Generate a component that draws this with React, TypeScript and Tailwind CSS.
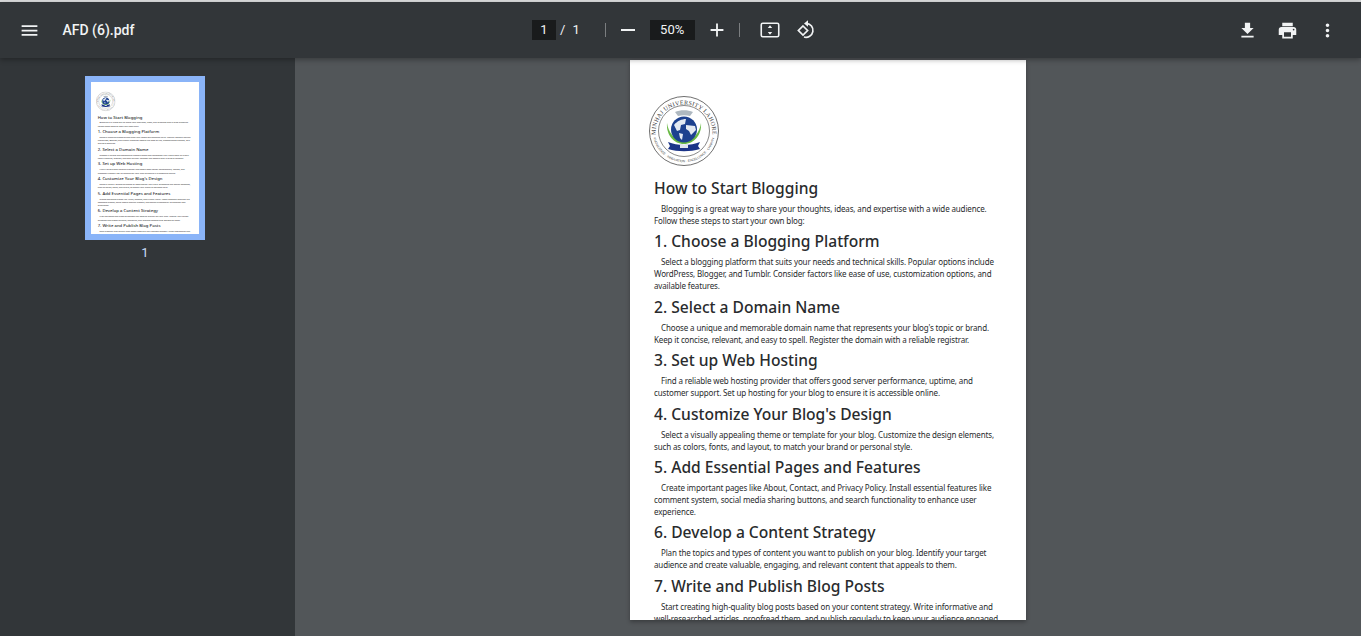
import React from 'react';

const SECTIONS = [
  { title: '1. Choose a Blogging Platform', lines: ['Select a blogging platform that suits your needs and technical skills. Popular options include', 'WordPress, Blogger, and Tumblr. Consider factors like ease of use, customization options, and', 'available features.'] },
  { title: '2. Select a Domain Name', lines: ["Choose a unique and memorable domain name that represents your blog's topic or brand.", 'Keep it concise, relevant, and easy to spell. Register the domain with a reliable registrar.'] },
  { title: '3. Set up Web Hosting', lines: ['Find a reliable web hosting provider that offers good server performance, uptime, and', 'customer support. Set up hosting for your blog to ensure it is accessible online.'] },
  { title: "4. Customize Your Blog's Design", lines: ['Select a visually appealing theme or template for your blog. Customize the design elements,', 'such as colors, fonts, and layout, to match your brand or personal style.'] },
  { title: '5. Add Essential Pages and Features', lines: ['Create important pages like About, Contact, and Privacy Policy. Install essential features like', 'comment system, social media sharing buttons, and search functionality to enhance user', 'experience.'] },
  { title: '6. Develop a Content Strategy', lines: ['Plan the topics and types of content you want to publish on your blog. Identify your target', 'audience and create valuable, engaging, and relevant content that appeals to them.'] },
  { title: '7. Write and Publish Blog Posts', lines: ['Start creating high-quality blog posts based on your content strategy. Write informative and', 'well-researched articles, proofread them, and publish regularly to keep your audience engaged.'] },
];

const Icon = ({ d, className = 'w-[21px] h-[21px]' }: { d: string; className?: string }) => (
  <svg viewBox="0 0 24 24" fill="currentColor" className={className} aria-hidden="true">
    <path d={d} />
  </svg>
);

const Logo = ({ id }: { id: string }) => (
  <svg viewBox="0 0 72 72" className="w-[72px] h-[72px]" aria-hidden="true">
    <defs>
      <path id={`${id}Top`} d="M7.500 38A28.500 28.500 0 1 1 64.500 38" />
      <path id={`${id}Bottom`} d="M4.800 36A31.200 31.200 0 0 0 67.200 36" />
    </defs>
    <circle cx="36" cy="36" r="34.500" fill="#fff" stroke="#4a4a4a" strokeWidth="0.8" />
    <circle cx="36" cy="36" r="25.500" fill="#fff" stroke="#555" strokeWidth="0.7" />
    <text fontFamily="'Liberation Serif', serif" fontSize="6" fill="#333" letterSpacing="0.3">
      <textPath href={`#${id}Top`} startOffset="50%" textAnchor="middle">MINHAJ UNIVERSITY LAHORE</textPath>
    </text>
    <text fontFamily="'Liberation Sans', sans-serif" fontSize="3.200" fill="#444">
      <textPath href={`#${id}Bottom`} startOffset="50%" textAnchor="middle">KNOWLEDGE · INNOVATION · EXCELLENCE · CHARITY</textPath>
    </text>
    <path d="M27 17c5-2.500 13-2.500 18 0l-3 4c-4-1-8-1-12 0z" fill="#aeb8c0" />
    <path d="M19 28c-1 12 7 21 17 21s18-9 17-21c-1 9-8 18-17 18s-16-9-17-18z" fill="#69b944" />
    <circle cx="36" cy="34.500" r="13" fill="#1d418f" />
    <path d="M26 30c3-4 8-6 12-6l-1 5-4 1-1 5-3 1zM38 30l9 1 1 4-5 5-2-4-3-2zM31 38l4 1-1 6-2-2z" fill="#e3e9f2" />
    <path d="M20 47c5 2 10 3 16 3s11-1 16-3l-2 4 2 3c-10 3-22 3-32 0l2-3z" fill="#1b3488" />
    <rect x="32" y="49.500" width="8" height="3.500" fill="#dfe4ee" />
  </svg>
);

const PageContent = ({ id }: { id: string }) => (
  <div className="w-[396px] h-[560px] bg-white overflow-hidden text-[#292b2d] font-['Noto_Sans',sans-serif]">
    <div className="h-[35px]" />
    <div className="pl-[18px] h-[72px]">
      <Logo id={id} />
    </div>
    <div className="pl-[24.5px]">
      <h1 className="mt-[11px] mb-[3.5px] text-[15.6px] leading-[21.4px] font-medium whitespace-nowrap">How to Start Blogging</h1>
      <p className="text-[8px] tracking-[-0.14px] leading-[12px] whitespace-nowrap indent-[7px]">Blogging is a great way to share your thoughts, ideas, and expertise with a wide audience.</p>
      <p className="text-[8px] tracking-[-0.14px] leading-[12px] whitespace-nowrap">Follow these steps to start your own blog:</p>
      {SECTIONS.map((s) => (
        <section key={s.title}>
          <h2 className="mt-[4.5px] mb-[3.5px] text-[15.6px] leading-[21.4px] font-medium whitespace-nowrap">{s.title}</h2>
          {s.lines.map((line, i) => (
            <p key={line} className={`text-[8px] tracking-[-0.14px] leading-[12px] whitespace-nowrap ${i === 0 ? 'indent-[7px]' : ''}`}>{line}</p>
          ))}
        </section>
      ))}
    </div>
  </div>
);

export default function App() {
  return (
    <div className="h-[636px] w-[1361px] overflow-hidden flex flex-col bg-[#525659] font-['Roboto',sans-serif] text-[#f1f3f4]">
      <div className="h-[2px] bg-[#d9dadb]" />
      <header className="relative z-10 h-[56px] shrink-0 flex items-center bg-[#323639] shadow-[0_2px_5px_rgba(0,0,0,0.3)]">
        <div className="w-[295px] flex items-center pl-[18.500px]">
          <Icon d="M3 18h18v-2H3v2zm0-5h18v-2H3v2zm0-7v2h18V6H3z" />
          <span className="ml-[23px] pt-[1px] text-[14px] font-medium">AFD (6).pdf</span>
        </div>
        <div className="flex items-center ml-[237px] text-[13px]">
          <span className="w-6 h-5 bg-[#191b1c] flex items-center justify-center">1</span>
          <span className="ml-[4px]">/</span>
          <span className="ml-[7px]">1</span>
          <span className="ml-[25px] w-px h-[14px] bg-[#7b7e80]" />
          <Icon className="ml-[10px] w-6 h-6" d="M5 11h14v2H5z" />
          <span className="ml-[10px] w-[45px] h-5 bg-[#191b1c] flex items-center justify-center">50%</span>
          <Icon className="ml-[11px] w-[22px] h-[22px]" d="M19 13h-6v6h-2v-6H5v-2h6V5h2v6h6v2z" />
          <span className="ml-[11px] w-px h-[14px] bg-[#7b7e80]" />
          <svg viewBox="0 0 24 24" className="ml-[18.5px] w-6 h-6" fill="none" aria-hidden="true">
            <rect x="3.250" y="5.250" width="17.500" height="13.500" rx="1.500" stroke="currentColor" strokeWidth="1.600" />
            <path d="M12 7.300l2.200 2.700h-4.400zM12 16.700l-2.200-2.700h4.400z" fill="currentColor" />
          </svg>
          <svg viewBox="0 0 24 24" className="ml-[11.500px] w-6 h-6" fill="none" aria-hidden="true">
            <path d="M12.500 5.300A7 7 0 1 1 10 19" stroke="currentColor" strokeWidth="1.700" />
            <path d="M14 2.300v6.400l-4-3.200z" fill="currentColor" />
            <path d="M9 8l4.600 4.500L9 17l-4.600-4.500z" stroke="currentColor" strokeWidth="1.700" />
          </svg>
        </div>
        <div className="ml-auto flex items-center gap-[19px] pr-[23px]">
          <Icon d="M19 9h-4V3H9v6H5l7 7 7-7zM5 18v2h14v-2H5z" />
          <Icon d="M19 8H5c-1.660 0-3 1.340-3 3v6h4v4h12v-4h4v-6c0-1.660-1.340-3-3-3zm-3 11H8v-5h8v5zm3-7c-.55 0-1-.45-1-1s.45-1 1-1 1 .45 1 1-.45 1-1 1zm-1-9H6v4h12V3z" />
          <Icon d="M12 8c1.100 0 2-.9 2-2s-.9-2-2-2-2 .9-2 2 .9 2 2 2zm0 2c-1.100 0-2 .9-2 2s.9 2 2 2 2-.9 2-2-.9-2-2-2zm0 6c-1.100 0-2 .9-2 2s.9 2 2 2 2-.9 2-2-.9-2-2-2z" />
        </div>
      </header>
      <div className="flex-1 flex min-h-0">
        <aside className="w-[295px] shrink-0 bg-[#323639] flex flex-col items-center pr-[5px] pt-[18px]">
          <div className="w-[120px] h-[164px] bg-[#8ab4f8] p-[6px]">
            <div className="w-[108px] h-[152px] overflow-hidden">
              <div className="origin-top-left scale-[0.2727]">
                <PageContent id="thumbSeal" />
              </div>
            </div>
          </div>
          <span className="mt-[5px] text-[13px] leading-4 text-[#c8dcfb]">1</span>
        </aside>
        <main className="flex-1 flex justify-center pt-[2px] pr-[1px]">
          <div className="h-[560px] shadow-[0_2px_4px_rgba(0,0,0,0.3)]">
            <PageContent id="pageSeal" />
          </div>
        </main>
      </div>
    </div>
  );
}
